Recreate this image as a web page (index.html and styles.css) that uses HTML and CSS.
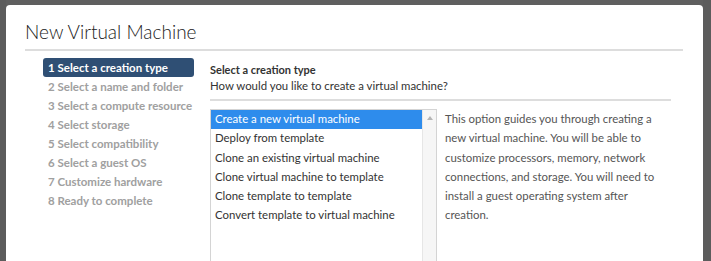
FILE: index.html
```html
<!DOCTYPE html>
<html lang="en">
<head>
    <meta charset="UTF-8">
    <title>New Virtual Machine</title>
    <link rel="stylesheet" href="styles.css">
</head>
<body>
    <div class="backdrop-left"></div>
    <div class="modal">
        <div class="modal-header">
            <h1>New Virtual Machine</h1>
        </div>
        <div class="modal-body">
            <ul class="steps">
                <li class="active">1 Select a creation type</li>
                <li>2 Select a name and folder</li>
                <li>3 Select a compute resource</li>
                <li>4 Select storage</li>
                <li>5 Select compatibility</li>
                <li>6 Select a guest OS</li>
                <li>7 Customize hardware</li>
                <li>8 Ready to complete</li>
            </ul>
            <div class="page">
                <div class="page-title">Select a creation type</div>
                <div class="page-sub">How would you like to create a virtual machine?</div>
                <div class="choice">
                    <div class="listbox">
                        <ul class="options">
                            <li class="selected">Create a new virtual machine</li>
                            <li>Deploy from template</li>
                            <li>Clone an existing virtual machine</li>
                            <li>Clone virtual machine to template</li>
                            <li>Clone template to template</li>
                            <li>Convert template to virtual machine</li>
                        </ul>
                        <div class="scrollbar"><span class="arrow"></span></div>
                    </div>
                    <p class="desc">This option guides you through creating a new virtual machine. You will be able to customize processors, memory, network connections, and storage. You will need to install a guest operating system after creation.</p>
                </div>
            </div>
        </div>
    </div>
    <div class="backdrop-right"></div>
</body>
</html>
```

FILE: styles.css
```css
body {
    margin: 0;
    height: 261px;
    overflow: hidden;
    background: #5f5f5f;
    font-family: Lato, "Open Sans", sans-serif;
    color: #333;
    display: flex;
    align-items: flex-start;
}
.backdrop-left {
    width: 6px;
    height: 261px;
    background: #5c5c5c;
}
.backdrop-right {
    width: 8px;
    height: 261px;
    background: #5c5c5c;
}
.modal {
    margin-top: 5px;
    width: 697px;
    height: 300px;
    background: #fff;
    border-radius: 4px 4px 0 0;
    flex-shrink: 0;
}
.modal-header {
    padding: 15px 20px 0 19px;
}
h1 {
    margin: 0;
    font-size: 19px;
    font-weight: 300;
    color: #222;
    padding-bottom: 6px;
    border-bottom: 2px solid #ddd;
}
.modal-body {
    display: flex;
    padding: 7px 0 0 37px;
    gap: 16px;
}
.steps {
    list-style: none;
    margin: 0;
    padding: 0;
    width: 151px;
}
.steps li {
    height: 19px;
    line-height: 19px;
    padding-left: 5px;
    font-size: 11.5px;
    font-weight: 700;
    color: #a0a0a0;
}
.steps li.active {
    background: #2f4f74;
    color: #fff;
    border-radius: 3px;
}
.page {
    width: 461px;
    padding-top: 5px;
}
.page-title {
    font-size: 11px;
    font-weight: 700;
    line-height: 14px;
}
.page-sub {
    font-size: 11.4px;
    line-height: 17px;
    padding-bottom: 5px;
    border-bottom: 2px solid #ddd;
}
.choice {
    display: flex;
    margin-top: 8px;
}
.listbox {
    width: 225px;
    height: 200px;
    border: 1px solid #d4d4d4;
    display: flex;
}
.options {
    list-style: none;
    margin: 0;
    padding: 0;
    flex: 1;
}
.options li {
    height: 19.3px;
    line-height: 18px;
    padding-left: 4px;
    font-size: 11.4px;
}
.options li.selected {
    background: #2e8cec;
    color: #fff;
}
.scrollbar {
    width: 13px;
    background: #f6f6f6;
    border-left: 1px solid #e6e6e6;
    display: flex;
    justify-content: center;
}
.arrow {
    margin-top: 6px;
    width: 0;
    height: 0;
    border-left: 3px solid transparent;
    border-right: 3px solid transparent;
    border-bottom: 4px solid #b5b5b5;
}
.desc {
    margin: 0 0 0 8px;
    width: 225px;
    font-size: 11.4px;
    line-height: 19.3px;
    color: #555;
}
```
